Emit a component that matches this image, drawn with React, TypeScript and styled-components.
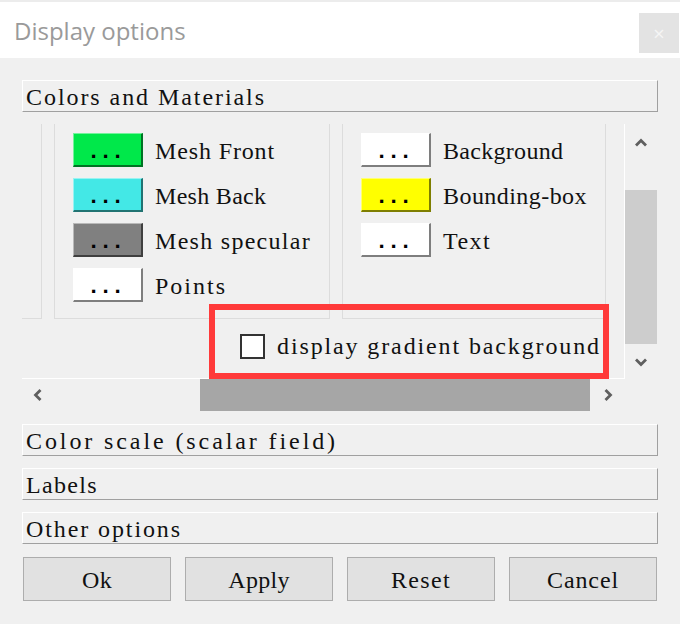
import React from "react";
import styled, { createGlobalStyle } from "styled-components";

const serif = `"Liberation Serif", "DejaVu Serif", serif`;
const mono = `"Liberation Mono", "DejaVu Sans Mono", monospace`;
const CELL = 12;
const FONT_SIZE = 24;

const Global = createGlobalStyle`
  html, body { margin: 0; padding: 0; background: #f0f0f0; }
  #root { width: 680px; height: 624px; }
  * { box-sizing: border-box; }
`;

const Window = styled.div`
  width: 680px;
  height: 624px;
  background: #f0f0f0;
  display: flex;
  flex-direction: column;
  overflow: hidden;
  font-family: ${serif};
  font-size: ${FONT_SIZE}px;
  color: #111;
`;

const TopStrip = styled.div`
  height: 2px;
  background: #ececec;
`;

const TitleBar = styled.div`
  height: 56px;
  background: #fff;
  display: flex;
  align-items: center;
  padding: 0 1px 0 14px;
`;

const Title = styled.div`
  font-family: "Open Sans", "Noto Sans", sans-serif;
  font-size: 24px;
  color: #9a9a9a;
`;

const CloseButton = styled.div`
  margin-left: auto;
  align-self: flex-start;
  margin-top: 11px;
  width: 40px;
  height: 40px;
  background: #e3e3e3;
  color: #f5f5f5;
  display: flex;
  align-items: center;
  justify-content: center;
  font-family: "Open Sans", sans-serif;
  font-size: 20px;
`;

const Body = styled.div`
  padding: 22px 22px 0 22px;
  display: flex;
  flex-direction: column;
  gap: 12px;
`;

const SectionHeader = styled.div`
  height: 32px;
  border-top: 1px solid #fff;
  border-left: 1px solid #fff;
  border-bottom: 1px solid #a0a0a0;
  border-right: 1px solid #a0a0a0;
  padding: 2px 0 0 3px;
  display: flex;
  align-items: center;
  white-space: pre;
`;

const ScrollArea = styled.div`
  position: relative;
  display: grid;
  grid-template-columns: 603px 33px;
  grid-template-rows: 255px 33px;
`;

const Viewport = styled.div`
  overflow: hidden;
  border-right: 1px solid #fff;
  border-bottom: 1px solid #fff;
`;

const ScrolledContent = styled.div<{ $x: number; $y: number }>`
  margin-top: ${(p) => -p.$y}px;
  margin-left: ${(p) => -p.$x}px;
  width: 900px;
  display: flex;
  flex-direction: column;
`;

const BoxesRow = styled.div`
  display: flex;
  gap: 12px;
`;

const GroupBox = styled.div<{ $w: number }>`
  width: ${(p) => p.$w}px;
  border: 1px solid #dcdcdc;
  padding: 28px 0 16px 18px;
  display: flex;
  flex-direction: column;
  gap: 11px;
`;

const ColorRow = styled.div`
  display: flex;
  align-items: center;
  gap: 12px;
  height: 34px;
  white-space: pre;
  padding-top: 2px;
`;

const Swatch = styled.div<{ $c: string }>`
  width: 70px;
  height: 34px;
  flex: none;
  margin-top: -2px;
  background: ${(p) => p.$c};
  border-top: 1px solid rgba(255, 255, 255, 0.45);
  border-left: 1px solid rgba(255, 255, 255, 0.45);
  border-right: 2px solid rgba(0, 0, 0, 0.5);
  border-bottom: 2px solid rgba(0, 0, 0, 0.5);
  display: flex;
  align-items: flex-end;
  justify-content: center;
  padding: 0 5px 1px 0;
  font-family: ${mono};
  font-size: 22px;
  letter-spacing: -1.2px;
  line-height: 22px;
  font-weight: bold;
  color: #000;
`;

const CheckRow = styled.div`
  margin-top: 14px;
  padding-left: 398px;
  display: flex;
  align-items: center;
  gap: 12px;
  white-space: pre;
`;

const CheckBox = styled.div`
  width: 25px;
  height: 25px;
  flex: none;
  border: 2px solid #333;
  background: #fff;
`;

const VScroll = styled.div`
  display: flex;
  flex-direction: column;
  width: 32px;
`;

const HScroll = styled.div`
  display: flex;
  height: 32px;
`;

const ArrowCell = styled.div<{ $size: number }>`
  flex: none;
  width: ${(p) => p.$size}px;
  height: ${(p) => p.$size}px;
  display: flex;
  align-items: center;
  justify-content: center;
`;

const ArrowCellV = styled(ArrowCell)`
  width: 32px;
`;

const ArrowCellH = styled(ArrowCell)`
  height: 32px;
`;

const VTrack = styled.div`
  flex: 1;
  display: flex;
  flex-direction: column;
  justify-content: flex-end;
`;

const HTrack = styled.div`
  flex: 1;
  display: flex;
  justify-content: flex-end;
`;

const VThumb = styled.div`
  width: 32px;
  height: 154px;
  background: #cdcdcd;
`;

const HThumb = styled.div`
  width: 390px;
  height: 32px;
  background: #a6a6a6;
`;

const Highlight = styled.div`
  position: absolute;
  left: 187px;
  top: 180px;
  width: 400px;
  height: 75px;
  border: 6px solid #ff3a3a;
  pointer-events: none;
`;

const ButtonRow = styled.div`
  display: flex;
  gap: 14px;
  padding: 0 1px;
  margin-top: 1px;
`;

const DialogButton = styled.div`
  width: 148px;
  height: 44px;
  background: #e1e1e1;
  border: 1px solid #adadad;
  display: flex;
  align-items: center;
  justify-content: center;
  padding-top: 2px;
`;

const CellSpan = styled.span`
  white-space: pre;
`;

// Fit proportional glyphs onto the dialog's fixed 12px character grid.
let measureCtx: CanvasRenderingContext2D | null = null;
function gridSpacing(text: string): number {
  if (typeof document === "undefined") return 1.5;
  if (!measureCtx) measureCtx = document.createElement("canvas").getContext("2d");
  if (!measureCtx) return 1.5;
  measureCtx.font = `${FONT_SIZE}px "Liberation Serif"`;
  const w = measureCtx.measureText(text).width;
  return Math.max(0.3, (text.length * CELL - w) / text.length);
}

const GridText = ({ children }: { children: string }) => (
  <CellSpan style={{ letterSpacing: `${gridSpacing(children)}px` }}>{children}</CellSpan>
);

const Chevron = ({ dir }: { dir: "up" | "down" | "left" | "right" }) => {
  const rot = { up: 0, right: 90, down: 180, left: 270 }[dir];
  return (
    <svg width="14" height="14" viewBox="0 0 14 14" style={{ transform: `rotate(${rot}deg)` }}>
      <path d="M2 9.5 L7 4.5 L12 9.5" fill="none" stroke="#5f5f5f" strokeWidth="2.8" />
    </svg>
  );
};

const leftColors = [
  { c: "#00e84a", label: "Mesh Front" },
  { c: "#43e8e6", label: "Mesh Back" },
  { c: "#808080", label: "Mesh specular" },
  { c: "#ffffff", label: "Points" },
];

const rightColors = [
  { c: "#ffffff", label: "Background" },
  { c: "#ffff00", label: "Bounding-box" },
  { c: "#ffffff", label: "Text" },
];

const sections = ["Color scale (scalar field)", "Labels", "Other options"];
const actions = ["Ok", "Apply", "Reset", "Cancel"];

export default function App() {
  return (
    <>
      <Global />
      <Window>
        <TopStrip />
        <TitleBar>
          <Title>Display options</Title>
          <CloseButton>×</CloseButton>
        </TitleBar>
        <Body>
          <SectionHeader>
            <GridText>Colors and Materials</GridText>
          </SectionHeader>
          <ScrollArea>
            <Viewport>
              <ScrolledContent $x={180} $y={20}>
                <BoxesRow>
                  <GroupBox $w={200} />
                  <GroupBox $w={276}>
                    {leftColors.map((r) => (
                      <ColorRow key={r.label}>
                        <Swatch $c={r.c}>...</Swatch>
                        <GridText>{r.label}</GridText>
                      </ColorRow>
                    ))}
                  </GroupBox>
                  <GroupBox $w={264}>
                    {rightColors.map((r) => (
                      <ColorRow key={r.label}>
                        <Swatch $c={r.c}>...</Swatch>
                        <GridText>{r.label}</GridText>
                      </ColorRow>
                    ))}
                  </GroupBox>
                </BoxesRow>
                <CheckRow>
                  <CheckBox />
                  <GridText>display gradient background</GridText>
                </CheckRow>
              </ScrolledContent>
            </Viewport>
            <VScroll>
              <ArrowCellV $size={38}>
                <Chevron dir="up" />
              </ArrowCellV>
              <VTrack>
                <VThumb />
              </VTrack>
              <ArrowCellV $size={35}>
                <Chevron dir="down" />
              </ArrowCellV>
            </VScroll>
            <HScroll>
              <ArrowCellH $size={32}>
                <Chevron dir="left" />
              </ArrowCellH>
              <HTrack>
                <HThumb />
              </HTrack>
              <ArrowCellH $size={35}>
                <Chevron dir="right" />
              </ArrowCellH>
            </HScroll>
            <div />
            <Highlight />
          </ScrollArea>
          {sections.map((s) => (
            <SectionHeader key={s}>
              <GridText>{s}</GridText>
            </SectionHeader>
          ))}
          <ButtonRow>
            {actions.map((a) => (
              <DialogButton key={a}>
                <GridText>{a}</GridText>
              </DialogButton>
            ))}
          </ButtonRow>
        </Body>
      </Window>
    </>
  );
}
